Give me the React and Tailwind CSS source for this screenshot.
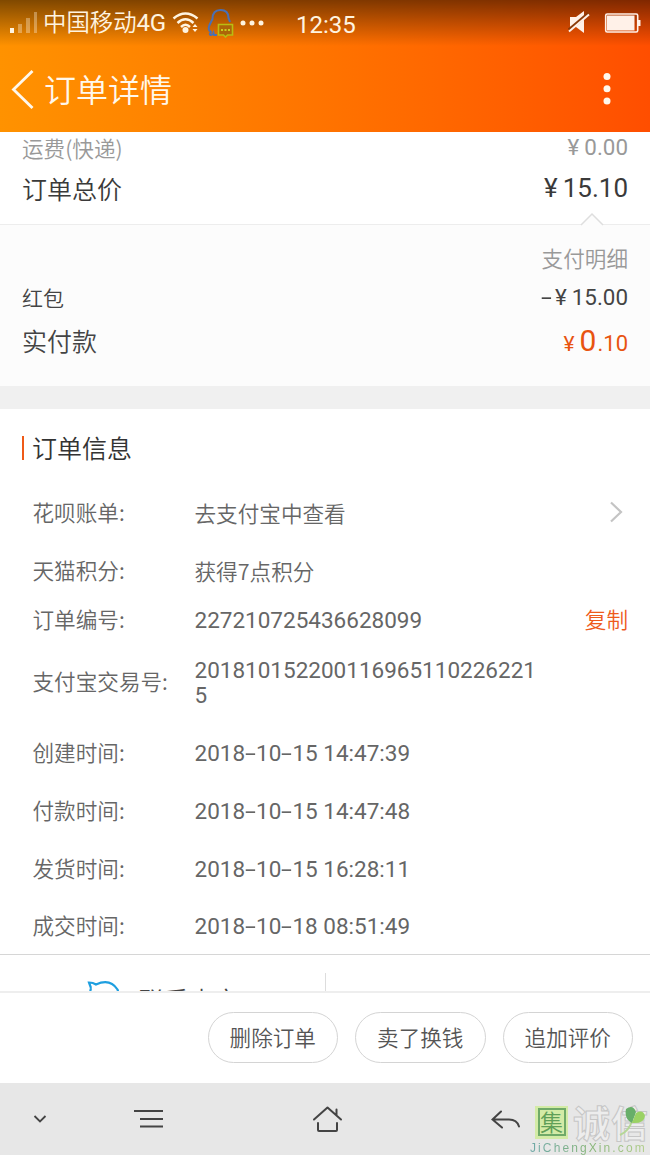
import React from "react";

const orderRows = [
  { label: "花呗账单:", value: "去支付宝中查看", h: "h-[58px]", arrow: true },
  { label: "天猫积分:", value: "获得7点积分", h: "h-[58px]" },
  { label: "订单编号:", value: "227210725436628099", h: "h-[40px]", num: true, copy: true },
  { label: "支付宝交易号:", value: "2018101522001169651102262215", h: "h-[84px]", num: true },
  { label: "创建时间:", value: "2018-10-15 14:47:39", h: "h-[58px]", num: true },
  { label: "付款时间:", value: "2018-10-15 14:47:48", h: "h-[58px]", num: true },
  { label: "发货时间:", value: "2018-10-15 16:28:11", h: "h-[58px]", num: true },
  { label: "成交时间:", value: "2018-10-18 08:51:49", h: "h-[56px]", num: true },
];

function Hyphen() {
  return <span className="inline-block w-[11px] origin-left scale-x-[1.750]">-</span>;
}

function Digits({ text }) {
  const parts = text.split("-");
  return parts.map((part, i) => (
    <React.Fragment key={i}>
      {i > 0 && <Hyphen />}
      {part}
    </React.Fragment>
  ));
}

function StatusBar() {
  return (
    <div className="flex h-[46px] items-center bg-gradient-to-b from-black/50 to-transparent text-[#fff4e0]">
      <svg className="ml-[9px] h-[24px] w-[30px] shrink-0" viewBox="0 0 30 24" fill="#fff4e0">
        <rect x="1" y="17" width="4" height="5" />
        <rect x="9" y="13" width="4" height="9" opacity=".35" />
        <rect x="17" y="7" width="4" height="15" opacity=".35" />
        <rect x="25" y="1" width="3" height="21" opacity=".35" />
      </svg>
      <span className="-mt-[2px] ml-[4px] w-[128px] whitespace-nowrap text-[23.4px] leading-none">
        中国移动<span className="font-['Roboto'] text-[24px] font-normal tracking-[-0.400px]">4G</span>
      </span>
      <svg className="ml-[1px] h-[24px] w-[28px] shrink-0" viewBox="0 0 28 24" fill="none" stroke="#fff4e0" strokeWidth="2.5">
        <path d="M1.5 7.5Q13.500 -2.500 25.500 7.500" />
        <path d="M5.500 12Q13.500 4.500 21.500 12" />
        <path d="M9 16Q13.500 11.500 18 16" />
        <circle cx="13.500" cy="19" r="3" fill="#fff4e0" stroke="none" />
        <path d="M20.500 16L23 13L25.500 16ZM20.500 18L23 21L25.500 18Z" fill="#fff4e0" stroke="none" />
      </svg>
      <svg className="-mt-[1px] ml-[7px] h-[30px] w-[27px] shrink-0" viewBox="0 0 27 30" fill="none">
        <path d="M10 27H7L6.500 25Q5.500 27.500 3.500 27Q2 26.500 4 24L2.500 22.500Q1 21 2.500 17L5.500 11Q5.500 2 13.500 2Q21.500 2 21.500 10L23 14" stroke="#4a70b4" strokeWidth="2" />
        <path d="M11.500 16.500H25.500V27H20.500L18.500 29L16.500 27H11.500Z" fill="#ad6508" stroke="#b8bd12" strokeWidth="1.600" />
        <g fill="#c8cf20">
          <rect x="14" y="21" width="2" height="2" />
          <rect x="17.500" y="21" width="2" height="2" />
          <rect x="21" y="21" width="2" height="2" />
        </g>
      </svg>
      <svg className="-mt-[1px] ml-[6px] h-[6px] w-[25px] shrink-0" viewBox="0 0 25 6" fill="#fff4e0">
        <circle cx="3" cy="3" r="2.500" />
        <circle cx="12" cy="3" r="2.500" />
        <circle cx="21" cy="3" r="2.500" />
      </svg>
      <span className="ml-[31px] mt-[3px] whitespace-nowrap font-['Roboto'] text-[24px] font-normal leading-none">12:35</span>
      <svg className="-mt-[2px] ml-auto mr-[14px] h-[24px] w-[22px] shrink-0" viewBox="0 0 22 24">
        <path d="M2 7H8L16 1V23L8 17H2Z" fill="#fff1e8" />
        <path d="M1 20L20.500 3.500" stroke="#8b3a08" strokeWidth="3.600" />
        <path d="M1 21.500L21 4.500" stroke="#fff1e8" strokeWidth="2" />
      </svg>
      <svg className="-mt-[1px] mr-[9px] h-[22px] w-[37px] shrink-0" viewBox="0 0 37 22">
        <rect x="1.700" y="2" width="32" height="18" rx="1.500" fill="none" stroke="#fff1e8" strokeWidth="1.600" />
        <rect x="3" y="3.500" width="27.500" height="15" fill="#fff1e8" />
        <rect x="34" y="8" width="2.500" height="6" fill="#fff1e8" />
      </svg>
    </div>
  );
}

function Header() {
  return (
    <header className="h-[132px] shrink-0 bg-gradient-to-r from-[#ff9200] to-[#ff4e00]">
      <StatusBar />
      <div className="flex h-[86px] items-center text-[#fff8ec]">
        <svg className="-mt-[1px] ml-[11px] h-[40px] w-[24px]" viewBox="0 0 24 40" fill="none" stroke="#fff8ec" strokeWidth="2.800">
          <path d="M21.500 2L2.500 20.500L21.500 39" />
        </svg>
        <h1 className="-mt-[3px] ml-[9px] text-[32px] leading-none">订单详情</h1>
        <svg className="ml-auto mr-[39px] h-[32px] w-[8px]" viewBox="0 0 8 32" fill="#fff8ec">
          <circle cx="4" cy="3.500" r="3.500" />
          <circle cx="4" cy="15.700" r="3.500" />
          <circle cx="4" cy="28" r="3.500" />
        </svg>
      </div>
    </header>
  );
}

function OrderRow({ row }) {
  return (
    <div className={`flex items-center pb-[2px] pl-[32.5px] pr-[22px] ${row.h}`}>
      <span className="w-[162px] shrink-0 whitespace-nowrap">{row.label}</span>
      <span
        className={
          row.num
            ? "mt-[4px] w-[346px] shrink-0 break-all font-['Roboto'] text-[22.5px] font-normal leading-[25.5px]"
            : "mt-[1px] leading-[25.5px]"
        }
      >
        {row.num ? <Digits text={row.value} /> : row.value}
      </span>
      {row.copy && <button className="ml-auto whitespace-nowrap text-[#ee5a1c]">复制</button>}
      {row.arrow && (
        <svg className="ml-auto mr-[5px] h-[22px] w-[15px]" viewBox="0 0 15 22" fill="none" stroke="#c4c4c4" strokeWidth="2.200">
          <path d="M3 1.500L13 11L3 20.500" />
        </svg>
      )}
    </div>
  );
}

function ActionButton({ children }) {
  return (
    <button className="h-[51px] w-[130.5px] rounded-full border border-[#d4d4d4] pb-[1px] text-[21.6px] leading-none text-[#555]">
      {children}
    </button>
  );
}

function Watermark() {
  return (
    <div className="absolute bottom-0 right-0 flex h-[50px] w-[120px] flex-col">
      <div className="flex h-[34px] items-center pl-[5px]">
        <div className="flex h-[33px] w-[33px] shrink-0 items-center justify-center bg-[#d3eba6]">
          <div className="flex h-[28px] w-[28px] items-center justify-center border-2 border-[#6faa68] pb-[2px] text-[23px] leading-none text-[#5f9f58]">集</div>
        </div>
        <span className="-mt-[1px] ml-[5px] whitespace-nowrap text-[37px] font-bold leading-[34px] tracking-[1px] text-[#ededed] [-webkit-text-stroke:1px_#c6c6c6]">诚信</span>
      </div>
      <svg className="absolute left-[88px] top-0 h-[32px] w-[28px]" viewBox="0 0 28 32">
        <path d="M2 30Q11 26 14 16" fill="none" stroke="#b5d796" strokeWidth="2" />
        <path d="M14 18Q6 14 8 4Q15 -1 18 7Z" fill="#68ae69" />
        <path d="M14 18L18 8Q25 4 27 11Q26 19 14 18Z" fill="#9bd264" />
      </svg>
      <div className="mt-[3px] whitespace-nowrap bg-gradient-to-r from-[#6fa8a8] via-[#86b578] to-[#b4cf8c] bg-clip-text font-['Liberation_Sans'] text-[12px] font-normal leading-[13px] tracking-[2.100px] text-transparent">
        JiChengXin.com
      </div>
    </div>
  );
}

export default function App() {
  return (
    <div className="flex h-[1155px] w-[650px] flex-col overflow-hidden bg-white font-['Noto_Sans_CJK_SC',sans-serif] font-[350] text-[21.6px] leading-none text-[#666]">
      <Header />

      <section className="h-[92px] shrink-0 px-[22px] text-[#3a3a3a]">
        <div className="flex h-[32px] items-center justify-between text-[21.6px] text-[#999]">
          <span className="whitespace-nowrap">运费(快递)</span>
          <span className="-mt-[2px] whitespace-nowrap font-['Roboto'] text-[22.4px] font-normal"><span className="mr-[5px]">¥</span>0.00</span>
        </div>
        <div className="flex h-[48px] items-center justify-between text-[25px]">
          <span>订单总价</span>
          <span className="font-['Roboto'] text-[26px] font-normal"><span className="mr-[5px]">¥</span>15.10</span>
        </div>
      </section>

      <section className="relative h-[162px] shrink-0 border-t border-[#ededed] bg-[#fcfcfc] px-[22px] text-[#444]">
        <svg className="absolute right-[45px] top-[-13px] h-[14px] w-[26px]" viewBox="0 0 26 14">
          <path d="M2 13L13 2L24 13V14H2Z" fill="#fcfcfc" />
          <path d="M2 13L13 2L24 13" fill="none" stroke="#dedede" strokeWidth="1.500" />
        </svg>
        <div className="flex h-[54px] items-center justify-end pt-[12px] text-[#999]">支付明细</div>
        <div className="flex h-[37px] items-center justify-between text-[21px]">
          <span>红包</span>
          <span className="font-['Roboto'] text-[22.4px] font-normal"><Hyphen /><span className="ml-[3px] mr-[5px]">¥</span>15.00</span>
        </div>
        <div className="flex h-[48px] items-center justify-between text-[25px]">
          <span>实付款</span>
          <span className="mt-[2px] font-['Roboto'] text-[22px] font-normal text-[#e85410]"><span className="mr-[5px] text-[21px]">¥</span><span className="text-[30px]">0</span><span className="ml-[1px]">.10</span></span>
        </div>
      </section>

      <div className="h-[23px] shrink-0 bg-[#f0f0f0]" />

      <section className="h-[545px] shrink-0">
        <div className="flex h-[75px] items-center pl-[22px] pt-[3px]">
          <span className="h-[24px] w-[2px] bg-[#ef5a18]" />
          <h2 className="-mt-[1px] ml-[8px] text-[25px] leading-none text-[#333]">订单信息</h2>
        </div>
        {orderRows.map((row) => (
          <OrderRow key={row.label} row={row} />
        ))}
      </section>

      <section className="flex h-[37px] shrink-0 overflow-hidden border-t border-[#d6d6d6]">
        <div className="flex w-[325px] items-start pl-[86px]">
          <svg className="mt-[25px] h-[32px] w-[36px] shrink-0" viewBox="0 0 36 32" fill="none" stroke="#1e9fe0" strokeWidth="2.200">
            <path d="M5 8L3 2.500Q7 2.500 10 4.500Q24 -2 31.500 9.500Q34 16 30 23Q20 31 9 25Q2 19 5 8" />
          </svg>
          <span className="ml-[17px] mt-[32px] whitespace-nowrap text-[25px] leading-none text-[#444]">联系卖家</span>
        </div>
        <div className="mt-[18px] h-[18px] w-px bg-[#ddd]" />
      </section>

      <section className="flex h-[92px] shrink-0 items-center justify-end gap-[17px] border-t-2 border-[#eee] pb-[2px] pr-[17px]">
        <ActionButton>删除订单</ActionButton>
        <ActionButton>卖了换钱</ActionButton>
        <ActionButton>追加评价</ActionButton>
      </section>

      <nav className="relative flex h-[72px] shrink-0 items-center bg-[#e7e7e7]">
        <svg className="ml-[33px] h-[10px] w-[14px]" viewBox="0 0 14 10" fill="none" stroke="#444" strokeWidth="1.800">
          <path d="M1.500 2L7 7.500L12.500 2" />
        </svg>
        <svg className="ml-[86px] h-[22px] w-[32px]" viewBox="0 0 32 22" fill="none" stroke="#444" strokeWidth="2">
          <path d="M1 3H30M7 11H30M7 18.500H30" />
        </svg>
        <svg className="ml-[147px] h-[28px] w-[32px]" viewBox="0 0 32 28" fill="none" stroke="#444" strokeWidth="2" strokeLinecap="round" strokeLinejoin="round">
          <path d="M2 14.500L15.500 2.500L29 14.500M24.500 10V4.500M6 18V25Q6 26 7 26H24Q25 26 25 25V18" />
        </svg>
        <svg className="ml-[147px] mt-[2px] h-[20px] w-[30px]" viewBox="0 0 30 20" fill="none" stroke="#444" strokeWidth="2" strokeLinecap="round">
          <path d="M10 1.500L1.500 9.500L11 17.500M1.500 9.500H18Q26 9.500 28 16.500" />
        </svg>
        <Watermark />
      </nav>
    </div>
  );
}
